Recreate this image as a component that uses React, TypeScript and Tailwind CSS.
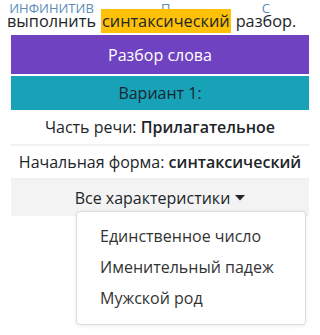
import React from 'react';

const words = [
    { text: 'выполнить', label: 'ИНФИНИТИВ', hl: false },
    { text: 'синтаксический', label: 'П', hl: true },
    { text: 'разбор.', label: 'С', hl: false },
];

const Caret = () => (
    <svg width="10" height="6" viewBox="0 0 10 6" className="ml-[5px] inline-block">
        <path d="M0 0 L10 0 L5 5.5 Z" fill="#212529" />
    </svg>
);

const App: React.FC = () => {
    return (
        <div
            className="w-[320px] h-[335px] overflow-hidden bg-white text-[#212529]"
            style={{ fontFamily: '"Open Sans", "Liberation Sans", sans-serif' }}
        >
            {/* sentence with word labels */}
            <div className="mt-[9px] pl-[7px] flex gap-[5px] h-[24px] text-[16.3px] leading-6 whitespace-nowrap">
                {words.map((w, i) => (
                    <span key={i} className="relative block">
                        <span className="absolute top-[-7px] left-[-20px] right-[-20px] text-center text-[13px] leading-[13px] text-[#5a8cb6]">
                            {w.label}
                        </span>
                        <span className={w.hl ? 'relative z-[1] block bg-[#ffc107] px-[1px]' : 'relative z-[1] block'}>
                            {w.text}
                        </span>
                    </span>
                ))}
            </div>

            {/* word analysis panel */}
            <div className="relative mx-[11px] mt-[2px] text-[16px] text-center">
                <div className="h-[39px] flex items-center justify-center bg-[#6f42c1] text-white">
                    Разбор слова
                </div>
                <div className="mt-[2px] h-[34px] flex items-center justify-center bg-[#17a2b8] text-[#1b2530]">
                    Вариант 1:
                </div>
                <div className="h-[36px] flex items-center justify-center border-b-2 border-[#f1f1f1]">
                    Часть речи:&nbsp;<span className="font-semibold">Прилагательное</span>
                </div>
                <div className="h-[34px] flex items-center justify-center border-b-2 border-[#f1f1f1]">
                    Начальная форма:&nbsp;<span className="font-semibold">синтаксический</span>
                </div>
                <div className="h-[36px] flex items-center justify-center bg-[#f3f3f3]">
                    Все характеристики
                    <Caret />
                </div>

                <div className="absolute left-[65px] top-[176px] w-[230px] rounded-[4px] border border-[#dcdcdc] bg-white pt-[8px] pb-[11px] text-left text-[#333] shadow-[0_1px_4px_rgba(0,0,0,0.08)]">
                    <div className="h-[31px] flex items-center px-[23px]">Единственное число</div>
                    <div className="h-[31px] flex items-center px-[23px]">Именительный падеж</div>
                    <div className="h-[31px] flex items-center px-[23px]">Мужской род</div>
                </div>
            </div>
        </div>
    );
};

export default App;
